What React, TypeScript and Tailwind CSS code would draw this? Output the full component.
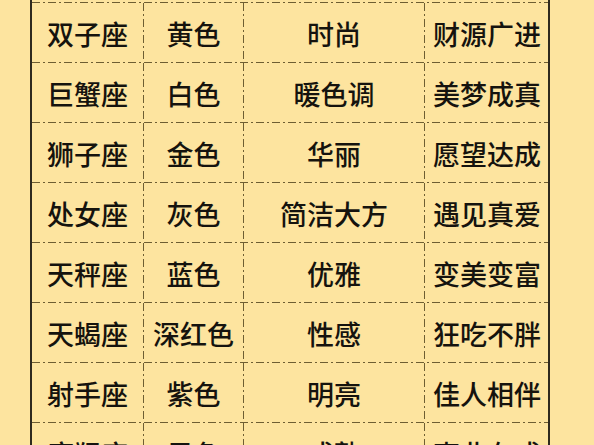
const rows = [
  ["", "", "", ""],
  ["双子座", "黄色", "时尚", "财源广进"],
  ["巨蟹座", "白色", "暖色调", "美梦成真"],
  ["狮子座", "金色", "华丽", "愿望达成"],
  ["处女座", "灰色", "简洁大方", "遇见真爱"],
  ["天秤座", "蓝色", "优雅", "变美变富"],
  ["天蝎座", "深红色", "性感", "狂吃不胖"],
  ["射手座", "紫色", "明亮", "佳人相伴"],
  ["摩羯座", "黑色", "成熟", "事业有成"],
];

const widths = ["w-[111px]", "w-[99px]", "w-[180px]", "w-[124px]"];

function VLine() {
  return (
    <div className="w-px self-stretch shrink-0 bg-[repeating-linear-gradient(180deg,#6e5e32_0_8px,transparent_8px_11px,#6e5e32_11px_13px,transparent_13px_16px)]" />
  );
}

function HLine() {
  return (
    <div className="h-px w-full bg-[repeating-linear-gradient(90deg,#6e5e32_0_8px,transparent_8px_11px,#6e5e32_11px_13px,transparent_13px_16px)]" />
  );
}

export default function App() {
  return (
    <div className="w-[594px] h-[445px] overflow-hidden bg-[#fde49f] font-['Noto_Sans_CJK_SC',sans-serif] text-[#15130e]">
      <div className="ml-[30px] w-[520px] border-x-2 border-[#2f2a1e] -mt-[57px]">
        {rows.map((r, i) => (
          <div key={i}>
            {i > 0 && <HLine />}
            <div className="flex h-[59px]">
              {r.map((t, j) => (
                <div key={j} className="contents">
                  {j > 0 && <VLine />}
                  <div
                    className={`${widths[j]} shrink-0 flex items-center justify-center pt-[2px] text-[27px] font-medium leading-none`}
                  >
                    {t}
                  </div>
                </div>
              ))}
            </div>
          </div>
        ))}
      </div>
    </div>
  );
}
